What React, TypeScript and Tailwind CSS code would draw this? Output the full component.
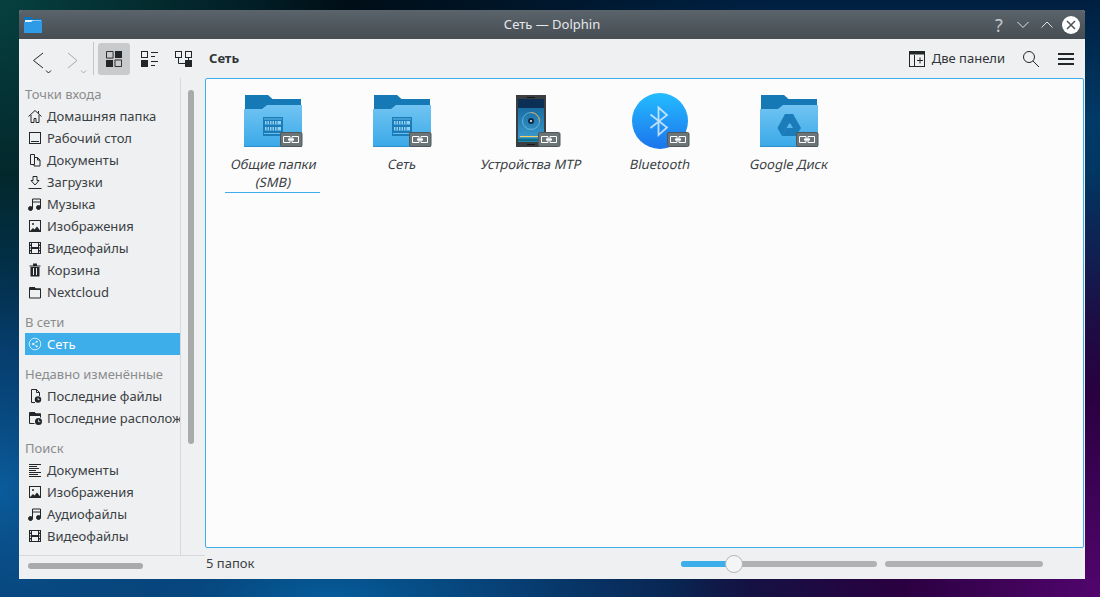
import type { ReactNode } from "react";

const ink = "#232629";

function Glyph({ children, size = 16, className = "" }: { children: ReactNode; size?: number; className?: string }) {
  return (
    <svg width={size} height={size} viewBox="0 0 16 16" fill="none" stroke={ink} strokeWidth="1" className={`shrink-0 ${className}`}>
      {children}
    </svg>
  );
}

const HomeIcon = () => (
  <Glyph>
    <path d="M1.500 8.500 8 2.500l6.500 6M4 7v7.500h3V10.500h2v4h3V7M11.500 3v2.500" />
  </Glyph>
);
const DesktopIcon = () => (
  <Glyph>
    <rect x="2.500" y="2.500" width="11" height="11" />
    <path d="M4 11.500h8" />
  </Glyph>
);
const DocsIcon = () => (
  <Glyph>
    <path d="M3.500 2.500h4v10h-4zM7.500 5.500h3l2.500 2.500v6H7V12.500" />
    <path d="M10.500 5.500V8H13" />
  </Glyph>
);
const DownloadIcon = () => (
  <Glyph>
    <path d="M1.500 14.500h13M6 2.500h4v4h2L8 11 4 6.500h2z" />
  </Glyph>
);
const MusicIcon = () => (
  <Glyph>
    <path d="M5.500 12.500V3h8v9" />
    <path d="M5.500 6h8" />
    <circle cx="3.500" cy="12.500" r="2" fill={ink} />
    <circle cx="11.500" cy="11.500" r="2" fill={ink} />
  </Glyph>
);
const ImageIcon = () => (
  <Glyph>
    <rect x="2.500" y="2.500" width="11" height="11" />
    <circle cx="6" cy="6" r="1" fill={ink} stroke="none" />
    <path d="M3 13l3-3 1.500 1.500L10 8.500l3.500 4.500z" fill={ink} stroke="none" />
  </Glyph>
);
const FilmIcon = () => (
  <Glyph>
    <path d="M2 2h12v12H2z" fill={ink} stroke="none" />
    <path d="M5 3h6v4H5zM5 9h6v4H5zM3 3h1v1.500H3zM3 6h1v1.500H3zM3 8.500h1V10H3zM3 11.500h1V13H3zM12 3h1v1.500h-1zM12 6h1v1.500h-1zM12 8.500h1V10h-1zM12 11.500h1V13h-1z" fill="#eff0f1" stroke="none" />
  </Glyph>
);
const TrashIcon = () => (
  <Glyph>
    <path d="M2.500 3.500h11v1h-11zM6 1.500h4v2H6zM3.500 5h9v9.500h-9z" fill={ink} stroke="none" />
    <path d="M6.500 6v7M9.500 6v7" stroke="#eff0f1" />
  </Glyph>
);
const FolderIcon = () => (
  <Glyph>
    <path d="M2.500 3.500h5l1.500 1.500h4.500v9h-11z" />
    <path d="M3 3h4.500L9 4.500h5V6H3z" fill={ink} stroke="none" />
  </Glyph>
);
const NetworkIcon = () => (
  <svg width="16" height="16" viewBox="0 0 16 16" fill="none" stroke="#ffffff" className="shrink-0">
    <circle cx="8" cy="8" r="5.800" strokeOpacity="0.750" />
    <path d="M9.800 5.600 6 8l3.800 2.400" strokeWidth="0.500" />
    <circle cx="6" cy="8" r="0.900" fill="#ffffff" stroke="none" />
    <circle cx="9.800" cy="5.600" r="0.900" fill="#ffffff" stroke="none" />
    <circle cx="9.800" cy="10.400" r="0.900" fill="#ffffff" stroke="none" />
  </svg>
);
const RecentFileIcon = () => (
  <Glyph>
    <path d="M8 14.500H4.500v-13h5l3 3V8M9.500 1.500v3h3" />
    <circle cx="11" cy="11.500" r="3.200" fill={ink} stroke="none" />
    <path d="M11 9.800v1.800h1.500" stroke="#eff0f1" strokeWidth="0.800" />
  </Glyph>
);
const RecentPlaceIcon = () => (
  <Glyph>
    <path d="M7.500 13.500h-5v-11h5l1.500 1.500h4.500v3.500" />
    <path d="M3 2h4.500L9 3.500h5V6H3z" fill={ink} stroke="none" />
    <circle cx="11.500" cy="11.500" r="3.500" fill={ink} stroke="none" />
    <path d="M11.500 9.500v2.200h1.800" stroke="#eff0f1" strokeWidth="0.800" />
  </Glyph>
);
const TextIcon = () => (
  <Glyph>
    <path d="M2 2.500h12M2 4.500h8M2 6.500h10M2 8.500h7M2 10.500h12M2 12.500h9M2 14.500h12" />
  </Glyph>
);

const sections = [
  {
    title: "Точки входа",
    items: [
      { label: "Домашняя папка", icon: <HomeIcon /> },
      { label: "Рабочий стол", icon: <DesktopIcon /> },
      { label: "Документы", icon: <DocsIcon /> },
      { label: "Загрузки", icon: <DownloadIcon /> },
      { label: "Музыка", icon: <MusicIcon /> },
      { label: "Изображения", icon: <ImageIcon /> },
      { label: "Видеофайлы", icon: <FilmIcon /> },
      { label: "Корзина", icon: <TrashIcon /> },
      { label: "Nextcloud", icon: <FolderIcon /> },
    ],
  },
  {
    title: "В сети",
    items: [{ label: "Сеть", icon: <NetworkIcon />, active: true }],
  },
  {
    title: "Недавно изменённые",
    items: [
      { label: "Последние файлы", icon: <RecentFileIcon /> },
      { label: "Последние расположения", icon: <RecentPlaceIcon /> },
    ],
  },
  {
    title: "Поиск",
    items: [
      { label: "Документы", icon: <TextIcon /> },
      { label: "Изображения", icon: <ImageIcon /> },
      { label: "Аудиофайлы", icon: <MusicIcon /> },
      { label: "Видеофайлы", icon: <FilmIcon /> },
    ],
  },
];

function LinkBadge() {
  return (
    <g>
      <rect x="39.500" y="43.500" width="21.500" height="14" rx="1.500" fill="#6b7577" stroke="#4f585a" />
      <path d="M42.500 47.500h6.500v6h-6.500zM51 47.500h6.500v6H51z" fill="none" stroke="#ffffff" />
      <path d="M47 50.500h6" stroke="#ffffff" strokeWidth="2" />
    </g>
  );
}

function FolderShape({ id, children }: { id: string; children: ReactNode }) {
  return (
    <svg width="64" height="64" viewBox="0 0 64 64">
      <defs>
        <linearGradient id={id} x1="0" y1="0" x2="0" y2="1">
          <stop offset="0" stopColor="#71c4f2" />
          <stop offset="1" stopColor="#3aa9e8" />
        </linearGradient>
      </defs>
      <path d="M4 6h23l4.500 4H60v14H4z" fill="#1479b5" />
      <path d="M3 20h18l5-4h35v42H3z" fill={`url(#${id})`} />
      <path d="M3 57h58v1H3z" fill="#2a8fca" />
      {children}
      <LinkBadge />
    </svg>
  );
}

const ServerMark = () => (
  <g>
    <path d="M22 28h20v19H22z" fill="#1a7cb8" />
    <path d="M23 29.500h18v1H23z" fill="#6cbdec" />
    <path d="M24 32h16v3.500H24zM24 38h16v3.500H24z" fill="#8fd0f3" />
    <path d="M26 32v3.500M28.500 32v3.500M31 32v3.500M33.500 32v3.500M36 32v3.500M26 38v3.500M28.500 38v3.500M31 38v3.500M33.500 38v3.500M36 38v3.500" stroke="#1a7cb8" />
    <path d="M23 44h18v1H23z" fill="#6cbdec" />
  </g>
);

const PhoneIcon = () => (
  <svg width="64" height="64" viewBox="0 0 64 64">
    <defs>
      <linearGradient id="screen" x1="0" y1="0" x2="0" y2="1">
        <stop offset="0" stopColor="#0f5f95" />
        <stop offset="1" stopColor="#3f9fd0" />
      </linearGradient>
    </defs>
    <rect x="17" y="6" width="30" height="52" fill="#3a3e42" />
    <path d="M28 8h8v1h-8zM28 55h8v1h-8z" fill="#15181a" />
    <rect x="19" y="10" width="26" height="43" fill="url(#screen)" />
    <rect x="19" y="10" width="26" height="9" fill="#0b2f55" />
    <circle cx="32" cy="32" r="8.500" fill="none" stroke="#7fc4e6" strokeWidth="0.700" />
    <path d="M32 23.500a8.500 8.500 0 0 1 8.500 8.500" fill="none" stroke="#f0a63a" strokeWidth="0.800" />
    <circle cx="32" cy="32" r="3" fill="#0d2a48" />
    <circle cx="32" cy="32" r="1" fill="#ffffff" />
    <path d="M21 47.500h20" stroke="#f6cf5e" strokeWidth="1" />
    <rect x="19" y="49.500" width="26" height="3" fill="#0f6f88" />
    <LinkBadge />
  </svg>
);

const BluetoothIcon = () => (
  <svg width="64" height="64" viewBox="0 0 64 64">
    <defs>
      <linearGradient id="blue" x1="0" y1="0" x2="0" y2="1">
        <stop offset="0" stopColor="#24bcff" />
        <stop offset="1" stopColor="#1c74ec" />
      </linearGradient>
    </defs>
    <circle cx="32" cy="32" r="28" fill="url(#blue)" />
    <path d="M22.500 25.500 39 38.500l-8.500 7.500V18.500l8.500 7.500L22.500 39" fill="none" stroke="#ffffff" strokeOpacity="0.700" strokeWidth="1.800" />
    <LinkBadge />
  </svg>
);

const places = [
  { lines: ["Общие папки", "(SMB)"], icon: <FolderShape id="f1"><ServerMark /></FolderShape>, hover: true },
  { lines: ["Сеть"], icon: <FolderShape id="f2"><ServerMark /></FolderShape> },
  { lines: ["Устройства MTP"], icon: <PhoneIcon /> },
  { lines: ["Bluetooth"], icon: <BluetoothIcon /> },
  {
    lines: ["Google Диск"],
    icon: (
      <FolderShape id="f3">
        <path d="M28 25 20.500 39 25 47l7-12.500 7 .0L36 25z" fill="#1a7cb8" />
        <path d="M36 25l8 14h-8l-4-7z" fill="#1a7cb8" />
        <path d="M25 47h14l5-8H29.500z" fill="#1a7cb8" />
      </FolderShape>
    ),
  },
];

export default function App() {
  return (
    <div className="relative w-[1100px] h-[597px] overflow-hidden font-['Noto_Sans',sans-serif] bg-[radial-gradient(circle_at_100%_100%,#52056e_0,#2a0040_16%,transparent_34%),radial-gradient(circle_at_0_0,#06403f_0,#03282c_14%,transparent_28%),radial-gradient(ellipse_420px_130px_at_30%_100%,#055c9a_0,transparent_100%),radial-gradient(ellipse_220px_260px_at_0_82%,#0a5c9c_0,transparent_100%),radial-gradient(ellipse_420px_200px_at_30%_0,#000d15_0,transparent_100%),linear-gradient(180deg,#001f40_0,#013a66_20%,#01315a_45%,#031a38_70%,#0a1a44_100%)]">
      <div className="absolute left-[19px] top-[10px] w-[1066px] h-[569px] flex flex-col bg-[#eff0f1] rounded-t-[3px] overflow-hidden">
        {/* titlebar */}
        <div className="relative h-[29px] shrink-0 flex items-center bg-[linear-gradient(180deg,#5b646b,#464d53)]">
          <svg width="20" height="18" viewBox="0 0 20 18" className="ml-[4px]">
            <path d="M1 1h7l2 2h9v13H1z" fill="#1272b6" />
            <path d="M2 4h16v2H2z" fill="#e8f2fa" />
            <path d="M1 6h7l2-1.500h9V17H1z" fill="#2f9be6" />
          </svg>
          <span className="absolute inset-x-0 text-center text-[13px] text-[#e6e8ea]">Сеть — Dolphin</span>
          <div className="ml-auto mr-[5px] flex items-center">
            <span className="w-[24px] text-center text-[18px] leading-none text-[#c5c9cc]">?</span>
            <svg width="24" height="16" viewBox="0 0 24 16" fill="none" stroke="#e0e3e5"><path d="m6.500 5 5.500 5.500L17.500 5" /></svg>
            <svg width="24" height="16" viewBox="0 0 24 16" fill="none" stroke="#e0e3e5"><path d="m6.500 10.500L12 5l5.500 5.500" /></svg>
            <svg width="18" height="18" viewBox="0 0 18 18" className="ml-[3px]">
              <circle cx="9" cy="9" r="9" fill="#ffffff" />
              <path d="m5 5 8 8M13 5l-8 8" stroke="#4a5157" strokeWidth="1.500" />
            </svg>
          </div>
        </div>

        {/* toolbar */}
        <div className="h-[39px] shrink-0 flex items-center text-[13px] text-[#31363b]">
          <svg width="74" height="32" viewBox="0 0 74 32" fill="none" stroke={ink} className="shrink-0">
            <path d="M24 10l-9.500 7.500L24 25" />
            <path d="m27 27.500 2.500 2.500 2.500-2.500" />
            <path d="M49 10l9 7.500L49 25" stroke="#a6a9ab" />
            <path d="m62 27.500 2.500 2.500 2.500-2.500" stroke="#a6a9ab" />
          </svg>
          <div className="w-px h-[33px] bg-[#c3c5c7] ml-0 mr-[4px]" />
          <button className="w-[32px] h-[32px] rounded-[3px] bg-[#c9cacc] flex items-center justify-center">
            <svg width="16" height="16" viewBox="0 0 16 16">
              <path d="M0 0h7v7H0zM9 9h7v7H9z" fill="none" stroke={ink} transform="translate(0.500 0.500) scale(0.940)" />
              <path d="M9 0h7v7H9zM0 9h7v7H0z" fill={ink} />
            </svg>
          </button>
          <div className="w-[34px] flex justify-center ml-[2px]">
            <svg width="17" height="16" viewBox="0 0 17 16" fill="none" stroke={ink}>
              <rect x="0.500" y="0.500" width="6" height="6" />
              <path d="M0 9h7v7H0z" fill={ink} stroke="none" />
              <path d="M10 1.500h7M10 5.500h4M10 10.500h7M10 14.500h4" />
            </svg>
          </div>
          <div className="w-[34px] flex justify-center">
            <svg width="17" height="16" viewBox="0 0 17 16" fill="none" stroke={ink}>
              <rect x="0.500" y="0.500" width="6" height="6" />
              <rect x="10.500" y="0.500" width="6" height="6" />
              <path d="M10 9h7v7h-7z" fill={ink} stroke="none" />
              <path d="M3.500 7v5.500H10M13.500 7v2" />
            </svg>
          </div>
          <span className="ml-[9px] font-bold">Сеть</span>
          <div className="ml-auto flex items-center">
            <svg width="16" height="16" viewBox="0 0 16 16" fill="none" stroke={ink}>
              <rect x="0.500" y="0.500" width="15" height="15" />
              <path d="M0 0h16v3.500H0z" fill={ink} stroke="none" />
              <path d="M5.500 4v11.500M8 9.500h6M11 6.500v6" />
            </svg>
            <span className="ml-[7px]">Две панели</span>
            <svg width="18" height="18" viewBox="0 0 18 18" fill="none" stroke={ink} className="ml-[17px]">
              <circle cx="7" cy="7" r="5.500" />
              <path d="m11 11 6 6" />
            </svg>
            <svg width="16" height="12" viewBox="0 0 16 12" className="ml-[18px] mr-[11px]">
              <path d="M0 0h16v2H0zM0 5h16v2H0zM0 10h16v2H0z" fill={ink} />
            </svg>
          </div>
        </div>

        <div className="flex-1 min-h-0 flex">
          {/* places sidebar */}
          <div className="w-[186px] shrink-0 flex flex-col">
            <div className="h-[478px] flex border-b border-[#d8d9da]">
              <div className="w-[162px] shrink-0 border-r border-[#d8d9da] pt-[5px] pl-[6px] overflow-hidden flex flex-col gap-[8px] text-[13px] leading-[22px]">
                {sections.map((section) => (
                  <div key={section.title}>
                    <div className="h-[22px] text-[#8a8c8e] whitespace-nowrap">{section.title}</div>
                    {section.items.map((item, i) => (
                      <div
                        key={i}
                        className={
                          "h-[22px] pl-[2px] flex items-center gap-[4px] whitespace-nowrap " +
                          ("active" in item ? "bg-[#3daee9] text-white" : "text-[#3a3f44]")
                        }
                      >
                        {item.icon}
                        <span>{item.label}</span>
                      </div>
                    ))}
                  </div>
                ))}
              </div>
              <div className="w-[6px] h-[354px] mt-[12px] ml-[7px] rounded-[3px] bg-[#a9aaab]" />
            </div>
            <div className="w-[115px] h-[6px] mt-[7px] ml-[9px] rounded-[3px] bg-[#a9aaab]" />
          </div>

          <div className="flex-1 min-w-0 flex flex-col">
            {/* file view */}
            <div className="h-[470px] mr-px rounded-[2px] border border-[#3daee9] bg-[#fcfcfc] pl-[2px] pt-[10px] grid grid-cols-[repeat(5,129px)] content-start">
              {places.map((place) => (
                <div key={place.lines[0]} className="flex flex-col items-center">
                  {place.icon}
                  <div
                    className={
                      "w-[95px] mt-[2px] pb-px flex flex-col items-center text-[13px] leading-[18px] text-[#3a3f44] whitespace-nowrap " +
                      ("hover" in place ? "border-b border-[#3daee9]" : "")
                    }
                  >
                    {place.lines.map((line) => (
                      <span key={line} className="-skew-x-12 translate-x-px">{line}</span>
                    ))}
                  </div>
                </div>
              ))}
            </div>

            {/* status bar */}
            <div className="flex-1 flex items-center pl-px text-[13px] text-[#3a3f44]">
              <span>5 папок</span>
              <div className="ml-auto mr-[42px] flex items-center gap-[8px]">
                <div className="relative w-[196px] h-[6px] rounded-[3px] bg-[#b0b1b2]">
                  <div className="w-[53px] h-full rounded-l-[3px] bg-[#3daee9]" />
                  <div className="absolute left-[44px] top-[-6px] w-[18px] h-[18px] rounded-full bg-[#f4f5f5] border border-[#b4b6b8]" />
                </div>
                <div className="w-[158px] h-[6px] rounded-[3px] bg-[#b0b1b2]" />
              </div>
            </div>
          </div>
        </div>
      </div>
    </div>
  );
}
